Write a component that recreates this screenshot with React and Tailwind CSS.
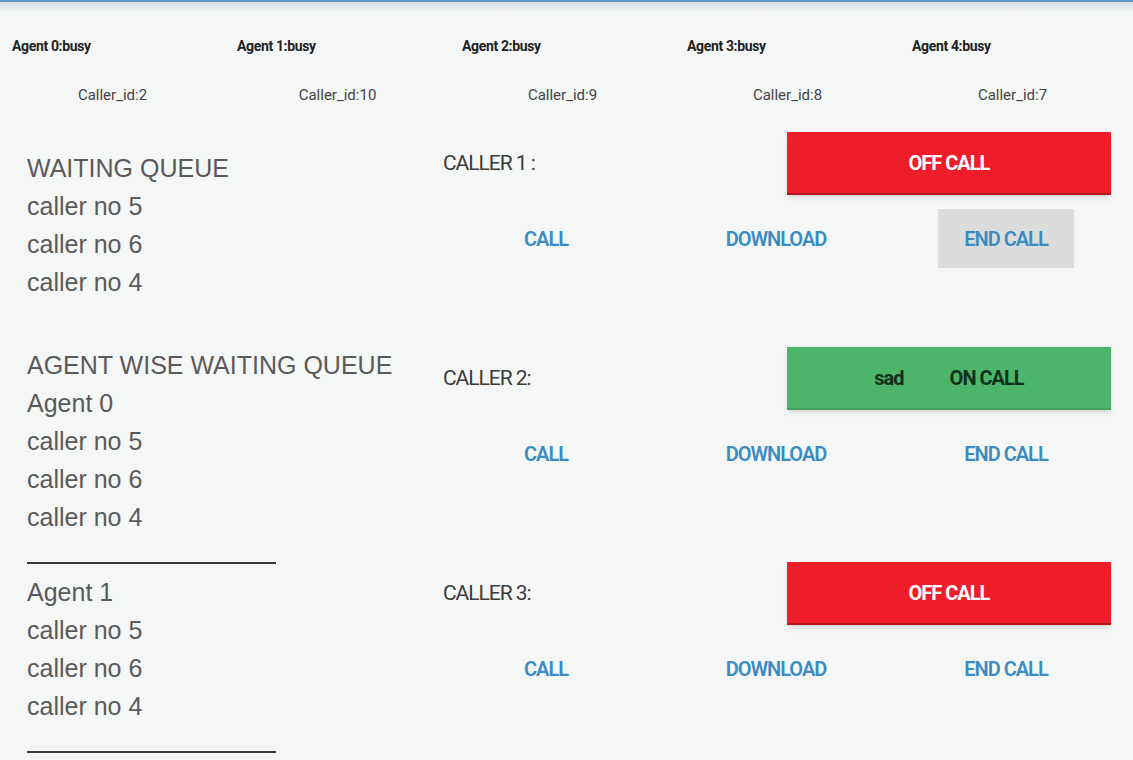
import React from "react";

const agents = [
    { name: "Agent 0:busy", caller: "Caller_id:2" },
    { name: "Agent 1:busy", caller: "Caller_id:10" },
    { name: "Agent 2:busy", caller: "Caller_id:9" },
    { name: "Agent 3:busy", caller: "Caller_id:8" },
    { name: "Agent 4:busy", caller: "Caller_id:7" },
];

const callers = [
    { label: "CALLER 1 :", onCall: false, endActive: true },
    { label: "CALLER 2:", onCall: true, endActive: false },
    { label: "CALLER 3:", onCall: false, endActive: false },
];

const queue = ["caller no 5", "caller no 6", "caller no 4"];

function CallerBlock({ caller }) {
    return (
        <div className="flex flex-col">
            <div className="flex h-[63px] items-center justify-between pl-3 pr-[22px]">
                <span className="text-[21px] tracking-tighter text-[#3c3c3c]">{caller.label}</span>
                {caller.onCall ? (
                    <div className="flex h-[63px] w-[324px] items-center justify-center gap-[46px] border-b-2 border-[#43a05e] bg-[#4db56b] text-[20px] font-bold tracking-tighter text-[#10301a] shadow-md">
                        <span>sad</span>
                        <span>ON CALL</span>
                    </div>
                ) : (
                    <div className="flex h-[63px] w-[324px] items-center justify-center border-b-2 border-[#b8141d] bg-[#ee1d2a] text-[20px] font-bold tracking-tighter text-white shadow-md">
                        OFF CALL
                    </div>
                )}
            </div>
            <div className="mt-[14px] grid h-[59px] w-[690px] grid-cols-3 text-[20px] font-semibold tracking-tighter text-[#3a8cc2]">
                <div className="flex items-center justify-center">CALL</div>
                <div className="flex items-center justify-center">DOWNLOAD</div>
                <div className="flex items-center justify-center">
                    <span className={caller.endActive ? "flex h-[59px] w-[136px] items-center justify-center bg-[#dcdcdc]" : ""}>
                        END CALL
                    </span>
                </div>
            </div>
        </div>
    );
}

export default function App() {
    return (
        <div className="h-[760px] w-full overflow-hidden bg-[#f5f6f6] font-['Roboto',sans-serif]">
            {/* app bar edge */}
            <div className="h-[2px] bg-[#5c99c9]" />
            <div className="h-[10px] bg-gradient-to-b from-[#d3d9de] to-[#f5f6f6]" />

            {/* agent status */}
            <div className="mt-[26px] grid w-[1125px] grid-cols-5">
                {agents.map((a) => (
                    <div key={a.name} className="pl-3 text-[14px] font-bold leading-4 tracking-tight text-[#222]">
                        {a.name}
                    </div>
                ))}
            </div>
            <div className="mt-[33px] grid w-[1125px] grid-cols-5">
                {agents.map((a) => (
                    <div key={a.caller} className="text-center text-[15px] leading-4 text-[#444]">
                        {a.caller}
                    </div>
                ))}
            </div>

            <div className="mt-[29px] flex">
                {/* queues */}
                <div className="w-[431px] shrink-0 pl-[27px] pt-[17px] font-['Liberation_Sans',Arial,sans-serif] text-[25px] leading-[38px] text-[#5a5a5a]">
                    <div>WAITING QUEUE</div>
                    {queue.map((q) => (
                        <div key={"w" + q}>{q}</div>
                    ))}
                    <div className="mt-[45px]">AGENT WISE WAITING QUEUE</div>
                    <div>Agent 0</div>
                    {queue.map((q) => (
                        <div key={"a0" + q}>{q}</div>
                    ))}
                    <div className="mb-[9px] mt-[26px] h-[2px] w-[249px] bg-[#3a3a3a]" />
                    <div>Agent 1</div>
                    {queue.map((q) => (
                        <div key={"a1" + q}>{q}</div>
                    ))}
                    <div className="mt-[26px] h-[2px] w-[249px] bg-[#3a3a3a]" />
                </div>

                {/* callers */}
                <div className="flex flex-1 flex-col gap-[79px]">
                    {callers.map((c) => (
                        <CallerBlock key={c.label} caller={c} />
                    ))}
                </div>
            </div>
        </div>
    );
}
